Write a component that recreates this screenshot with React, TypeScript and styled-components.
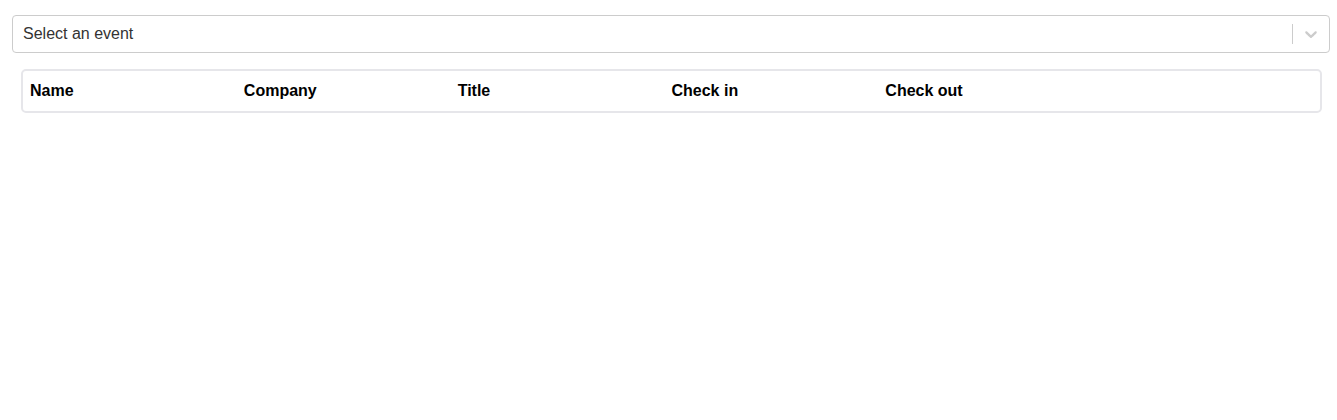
import React from 'react';
import styled, { createGlobalStyle } from 'styled-components';

const GlobalStyle = createGlobalStyle`
  body {
    margin: 0;
    font-family: "Liberation Sans", Arial, sans-serif;
    background: #fff;
  }
`;

const Page = styled.div`
  padding: 15px 7px 0 12px;
`;

const SelectControl = styled.div`
  display: flex;
  align-items: center;
  height: 38px;
  box-sizing: border-box;
  border: 1px solid #ccc;
  border-radius: 4px;
  background: #fff;
  cursor: default;
`;

const ValueContainer = styled.div`
  flex: 1;
  padding: 2px 10px;
  font-size: 16px;
  color: #333;
`;

const Separator = styled.span`
  align-self: stretch;
  width: 1px;
  margin: 8px 0;
  background: #ccc;
`;

const Indicator = styled.div`
  display: flex;
  padding: 8px;
  color: #ccc;
`;

const Table = styled.div`
  margin: 16px 8px 0 9px;
  border: 2px solid #e6e6ea;
  border-radius: 5px;
  padding: 0 7px;
`;

const HeaderRow = styled.div`
  display: grid;
  grid-template-columns: repeat(6, 1fr);
  height: 40px;
  align-items: center;
`;

const HeaderCell = styled.div`
  font-size: 16px;
  font-weight: bold;
  color: #000;
`;

const columns = ['Name', 'Company', 'Title', 'Check in', 'Check out', ''];

const App: React.FC = () => {
  return (
    <>
      <GlobalStyle />
      <Page>
        <SelectControl>
          <ValueContainer>Select an event</ValueContainer>
          <Separator />
          <Indicator>
            <svg width="20" height="20" viewBox="0 0 20 20" fill="currentColor">
              <path d="M4.516 7.548c0.436-0.446 1.043-0.481 1.576 0l3.908 3.747 3.908-3.747c0.533-0.481 1.141-0.446 1.574 0 0.436 0.445 0.408 1.197 0 1.615-0.406 0.418-4.695 4.502-4.695 4.502-0.217 0.223-0.502 0.335-0.787 0.335s-0.57-0.112-0.789-0.335c0 0-4.287-4.084-4.695-4.502s-0.436-1.17 0-1.615z" />
            </svg>
          </Indicator>
        </SelectControl>
        <Table>
          <HeaderRow>
            {columns.map((c, i) => (
              <HeaderCell key={i}>{c}</HeaderCell>
            ))}
          </HeaderRow>
        </Table>
      </Page>
    </>
  );
};

export default App;
